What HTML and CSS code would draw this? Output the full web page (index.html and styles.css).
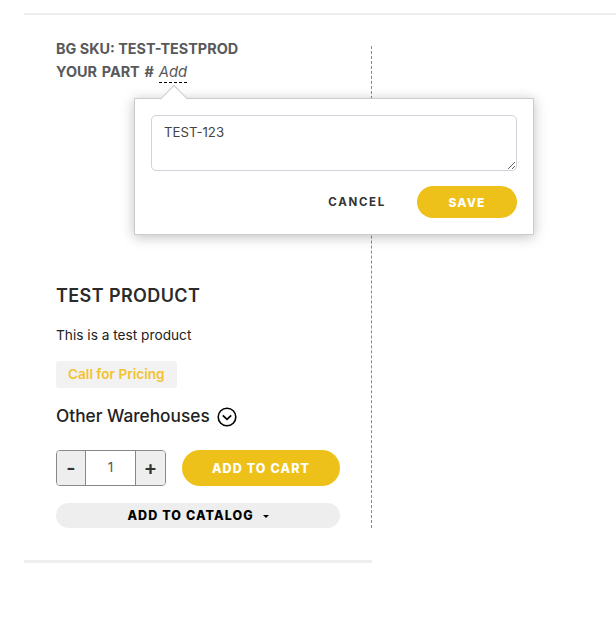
FILE: index.html
```html
<!DOCTYPE html>
<html lang="en">
<head>
    <meta charset="UTF-8">
    <meta name="viewport" content="width=device-width, initial-scale=1.0">
    <title>Test Product</title>
    <link rel="stylesheet" href="styles.css">
</head>
<body>
    <div class="product-row">
        <div class="product-col">
            <div class="product-info">
                <div class="sku-block">
                    <div class="sku-line">BG SKU: TEST-TESTPROD</div>
                    <div class="sku-line part-line">YOUR PART # <a class="part-add">Add</a></div>
                </div>

                <div class="part-popover">
                    <textarea class="part-input">TEST-123</textarea>
                    <div class="popover-actions">
                        <button type="button" class="btn-cancel">CANCEL</button>
                        <button type="button" class="btn-save">SAVE</button>
                    </div>
                </div>

                <h1 class="product-title">TEST PRODUCT</h1>
                <p class="product-desc">This is a test product</p>
                <div class="price-badge">Call for Pricing</div>
                <div class="warehouses">
                    <span>Other Warehouses</span>
                    <svg class="warehouse-icon" width="20" height="20" viewBox="0 0 20 20">
                        <circle cx="10" cy="10" r="8.8" fill="none" stroke="#000" stroke-width="1.6"/>
                        <path d="M5.8 8.4 L10 12.4 L14.2 8.4" fill="none" stroke="#000" stroke-width="1.7"/>
                    </svg>
                </div>
                <div class="cart-row">
                    <div class="qty">
                        <button type="button" class="qty-btn">-</button>
                        <div class="qty-value">1</div>
                        <button type="button" class="qty-btn">+</button>
                    </div>
                    <button type="button" class="btn-cart">ADD TO CART</button>
                </div>
                <button type="button" class="btn-catalog">ADD TO CATALOG <span class="caret"></span></button>
            </div>
        </div>
    </div>
</body>
</html>
```

FILE: styles.css
```css
body {
    font-family: Inter, "Open Sans", sans-serif;
    background-color: #fff;
    color: #222;
    margin: 0;
    padding: 13px 0 0 24px;
}

button {
    font-family: inherit;
    border: none;
    cursor: pointer;
}

.product-row {
    border-top: 2px solid #eee;
}

.product-col {
    width: 348px;
    box-sizing: border-box;
    padding-top: 31px;
    padding-bottom: 32px;
    border-bottom: 3px solid #eee;
}

.product-info {
    display: flow-root;
    position: relative;
    box-sizing: border-box;
    height: 482px;
    padding-left: 32px;
    padding-right: 31px;
    border-right: 1px dashed #888;
}

.sku-block {
    margin-top: -9px;
}

.sku-line {
    font-size: 14.4px;
    font-weight: 700;
    line-height: 23px;
    color: #58595b;
    height: 23px;
}

.part-line {
    word-spacing: 1.4px;
}

.part-add {
    font-size: 14.8px;
    font-weight: 400;
    font-style: italic;
    color: #58595b;
    border-bottom: 1px dashed #000;
    padding-bottom: 1px;
}

.part-popover {
    position: absolute;
    top: 52px;
    left: 110px;
    width: 400px;
    height: 137px;
    box-sizing: border-box;
    padding: 16px;
    background: #fff;
    border: 1px solid #ccc;
    box-shadow: 0 2px 12px rgba(0, 0, 0, 0.25);
}

.part-popover::before {
    content: "";
    position: absolute;
    top: -10px;
    left: 29px;
    width: 19px;
    height: 19px;
    background: #fff;
    border-top: 1px solid #ccc;
    border-left: 1px solid #ccc;
    transform: rotate(45deg);
}

.part-input {
    display: block;
    position: relative;
    width: 100%;
    height: 56px;
    box-sizing: border-box;
    margin: 0;
    padding: 6px 12px;
    font-family: inherit;
    font-size: 13.2px;
    line-height: 20px;
    color: #444;
    border: 1px solid #ced4da;
    border-radius: 5px;
}

.popover-actions {
    display: flex;
    justify-content: flex-end;
    align-items: center;
    gap: 31px;
    margin-top: 15px;
}

.btn-cancel {
    background: none;
    padding: 0;
    font-size: 11.5px;
    font-weight: 700;
    letter-spacing: 1.7px;
    color: #333;
}

.btn-save {
    width: 100px;
    height: 32px;
    background: #eec11a;
    color: #fff;
    border-radius: 16px;
    font-size: 12px;
    font-weight: 800;
    letter-spacing: 1.1px;
}

.product-title {
    margin: 201px 0 0;
    font-size: 18px;
    font-weight: 600;
    letter-spacing: 0.4px;
    line-height: 24px;
    color: #2b2b2b;
}

.product-desc {
    margin: 17px 0 0;
    font-size: 13.7px;
    line-height: 20px;
    color: #222;
}

.price-badge {
    display: inline-block;
    margin-top: 16px;
    padding: 0 12px;
    height: 27px;
    line-height: 27px;
    background: #f2f2f2;
    border-radius: 3px;
    font-size: 13.6px;
    font-weight: 600;
    color: #f3c230;
}

.warehouses {
    display: flex;
    align-items: center;
    gap: 7px;
    margin-top: 13px;
    height: 28px;
    font-size: 17.3px;
    font-weight: 500;
    color: #222;
}

.warehouse-icon {
    margin-top: 3px;
}

.cart-row {
    display: flex;
    align-items: center;
    gap: 16px;
    margin-top: 21px;
}

.qty {
    display: flex;
    width: 110px;
    height: 36px;
    box-sizing: border-box;
    border: 1px solid #888;
    border-radius: 4px;
    overflow: hidden;
}

.qty-btn {
    width: 28px;
    padding: 0;
    background: #eee;
    font-size: 20px;
    font-weight: 600;
    color: #333;
}

.qty-btn:last-child {
    width: 29px;
}

.qty-value {
    flex: 1;
    text-align: center;
    line-height: 33px;
    font-size: 13.5px;
    color: #555;
    border-left: 1px solid #888;
    border-right: 1px solid #888;
}

.btn-cart {
    width: 158px;
    height: 36px;
    background: #eec11a;
    color: #fff;
    border-radius: 18px;
    font-size: 12.5px;
    font-weight: 800;
    letter-spacing: 1.1px;
}

.btn-catalog {
    display: block;
    width: 284px;
    height: 25px;
    margin-top: 17px;
    padding: 0;
    background: #eee;
    color: #000;
    border-radius: 13px;
    font-size: 12.5px;
    font-weight: 800;
    letter-spacing: 1.1px;
}

.caret {
    display: inline-block;
    margin-left: 5px;
    vertical-align: 2px;
    border-top: 3px solid #000;
    border-left: 3px solid transparent;
    border-right: 3px solid transparent;
}
```
